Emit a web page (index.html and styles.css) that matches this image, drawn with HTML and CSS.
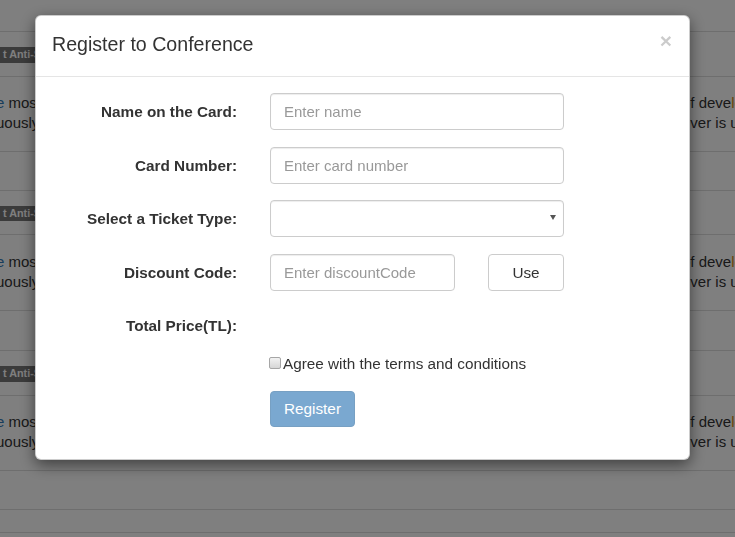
FILE: index.html
```html
<!DOCTYPE html>
<html lang="en">
<head>
<meta charset="utf-8">
<title>Register to Conference</title>
<link rel="stylesheet" href="styles.css">
</head>
<body>
<div class="page">
  <div class="tr r-head"></div>
  <div class="tr r-lab"><span class="badge">t Anti-Spam</span></div>
  <div class="tr r-txt">
    <div class="cell-l"><span class="lnk">e</span> most<br>uously</div>
    <div class="cell-r">of deve<span class="hl">lopers</span><br>ever is used</div>
  </div>
  <div class="tr r-emp"></div>
  <div class="tr r-lab r-lab-s"><span class="badge">t Anti-Spam</span></div>
  <div class="tr r-txt r-txt-l">
    <div class="cell-l"><span class="lnk">e</span> most<br>uously</div>
    <div class="cell-r">of deve<span class="hl">lopers</span><br>ever is used</div>
  </div>
  <div class="tr r-emp r-emp-l"></div>
  <div class="tr r-lab"><span class="badge">t Anti-Spam</span></div>
  <div class="tr r-txt">
    <div class="cell-l"><span class="lnk">e</span> most<br>uously</div>
    <div class="cell-r">of deve<span class="hl">lopers</span><br>ever is used</div>
  </div>
  <div class="tr r-emp"></div>
  <div class="tr r-small"></div>
</div>

<div class="backdrop"></div>

<div class="modal-wrap">
  <div class="modal">
    <div class="modal-header">
      <h4 class="modal-title">Register to Conference</h4>
      <button class="close" type="button">&times;</button>
    </div>
    <div class="modal-body">
      <form class="form">
        <div class="group">
          <label class="ctl-label">Name on the Card:</label>
          <input class="ctl" type="text" placeholder="Enter name">
        </div>
        <div class="group group-tight">
          <label class="ctl-label">Card Number:</label>
          <input class="ctl" type="text" placeholder="Enter card number">
        </div>
        <div class="group">
          <label class="ctl-label">Select a Ticket Type:</label>
          <div class="select-wrap">
            <select class="ctl sel"><option></option></select>
          </div>
        </div>
        <div class="group">
          <label class="ctl-label">Discount Code:</label>
          <div class="discount">
            <input class="ctl ctl-short" type="text" placeholder="Enter discountCode">
            <button class="btn btn-default btn-use" type="button">Use</button>
          </div>
        </div>
        <div class="group group-price">
          <label class="ctl-label">Total Price(TL):</label>
          <div></div>
        </div>
        <div class="group group-check">
          <div></div>
          <label class="check"><input type="checkbox" class="cb">Agree with the terms and conditions</label>
        </div>
        <div class="group group-last">
          <div></div>
          <div><button class="btn btn-primary" type="button" disabled>Register</button></div>
        </div>
      </form>
    </div>
  </div>
</div>
</body>
</html>
```

FILE: styles.css
```css
html, body {
  margin: 0;
  padding: 0;
}
body {
  width: 735px;
  height: 537px;
  overflow: hidden;
  background: #fff;
  font-family: "Liberation Sans", Arial, sans-serif;
  font-size: 15px;
  color: #333;
}

/* background page */
.page {
  display: flex;
  flex-direction: column;
}
.tr {
  box-sizing: border-box;
  border-bottom: 1px solid #ddd;
  display: flex;
  align-items: center;
  justify-content: space-between;
  flex: none;
}
.r-head { height: 32px; }
.r-lab { height: 45px; padding-top: 2px; }
.r-lab-s { height: 44px; }
.r-txt { height: 75px; line-height: 20px; padding-bottom: 2px; }
.r-txt-l { height: 76px; }
.r-emp { height: 39px; }
.r-emp-l { height: 40px; }
.r-small { height: 23px; }
.badge {
  display: inline-block;
  background: #777;
  color: #fff;
  font-weight: bold;
  font-size: 10.8px;
  line-height: 1;
  padding: 2px 6px 3px 3px;
  white-space: nowrap;
}
.cell-l {
  margin-left: -4px;
  white-space: nowrap;
}
.cell-r {
  width: 53px;
  white-space: nowrap;
  overflow: hidden;
}
.lnk { color: #337ab7; }
.hl { color: #d08a10; }

.backdrop {
  position: fixed;
  inset: 0;
  background: rgba(0, 0, 0, 0.5);
}

/* modal */
.modal-wrap {
  position: fixed;
  inset: 0;
  padding: 15px 0 0 35px;
}
.modal {
  box-sizing: border-box;
  width: 655px;
  background: #fff;
  border: 1px solid rgba(0, 0, 0, 0.2);
  border-radius: 6px;
  box-shadow: 0 5px 15px rgba(0, 0, 0, 0.5);
}
.modal-header {
  display: flex;
  justify-content: space-between;
  align-items: flex-start;
  padding: 14px 17px 18px 16px;
  border-bottom: 1px solid #e5e5e5;
}
.modal-title {
  margin: 0;
  font-size: 19.6px;
  font-weight: normal;
  line-height: 28px;
  color: #333;
}
.close {
  margin-top: 0;
  padding: 0;
  border: 0;
  background: transparent;
  font-family: "Liberation Sans", Arial, sans-serif;
  font-size: 21px;
  font-weight: bold;
  line-height: 1;
  color: #000;
  opacity: 0.2;
  text-shadow: 0 1px 0 #fff;
}
.modal-body {
  padding: 16px 15px 15px 15px;
}
.form {
  margin: 0;
  display: flex;
  flex-direction: column;
}
.group {
  display: grid;
  grid-template-columns: 186px 294px;
  column-gap: 33px;
  margin-bottom: 17px;
}
.group-tight { margin-bottom: 16px; }
.group-price { margin-bottom: 16.5px; }
.group-check { margin-bottom: 16.5px; }
.group-last { margin-bottom: 17.5px; }
.ctl-label {
  text-align: right;
  font-weight: bold;
  font-size: 15.3px;
  line-height: 21.43px;
  padding-top: 8px;
  color: #333;
  white-space: nowrap;
}
.group-price .ctl-label { padding-top: 7px; }
.ctl {
  box-sizing: border-box;
  width: 100%;
  height: 37px;
  margin: 0;
  padding: 6px 13px;
  font-family: "Liberation Sans", Arial, sans-serif;
  font-size: 15px;
  line-height: 21.43px;
  color: #555;
  background: #fff;
  border: 1px solid #ccc;
  border-radius: 4px;
  box-shadow: inset 0 1px 1px rgba(0, 0, 0, 0.075);
}
.ctl::placeholder { color: #999; }
.select-wrap {
  position: relative;
}
.sel {
  appearance: none;
  -webkit-appearance: none;
}
.select-wrap::after {
  content: "";
  position: absolute;
  right: 8px;
  top: 15px;
  border-left: 3px solid transparent;
  border-right: 3px solid transparent;
  border-top: 5px solid #555;
}
.discount {
  display: flex;
  justify-content: space-between;
}
.ctl-short { width: 185px; }
.btn {
  box-sizing: border-box;
  height: 36px;
  padding: 6px 13px;
  font-family: "Liberation Sans", Arial, sans-serif;
  font-size: 15.3px;
  line-height: 22px;
  border: 1px solid transparent;
  border-radius: 4px;
}
.btn-default {
  background: #fff;
  border-color: #ccc;
  color: #333;
}
.btn-use {
  width: 76px;
  height: 37px;
}
.btn-primary {
  width: 85px;
  background: #337ab7;
  border-color: #2e6da4;
  color: #fff;
}
.btn-primary:disabled { opacity: 0.65; }
.check {
  display: flex;
  align-items: center;
  font-size: 15.3px;
  line-height: 21.43px;
  color: #333;
  margin-left: -1px;
}
.cb {
  appearance: none;
  -webkit-appearance: none;
  box-sizing: border-box;
  width: 12px;
  height: 12px;
  margin: -1px 2px 0 0;
  border: 1px solid #a6a6a6;
  border-radius: 2px;
  background: linear-gradient(#f2f2f2, #d6d6d6);
}
```
